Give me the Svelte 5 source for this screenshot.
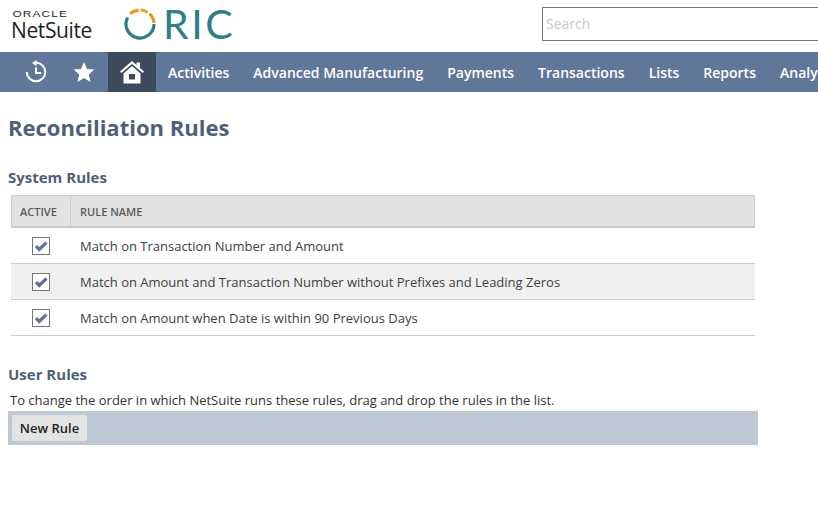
<script>
	const navItems = ['Activities', 'Advanced Manufacturing', 'Payments', 'Transactions', 'Lists', 'Reports', 'Analytics'];
	const systemRules = [
		'Match on Transaction Number and Amount',
		'Match on Amount and Transaction Number without Prefixes and Leading Zeros',
		'Match on Amount when Date is within 90 Previous Days'
	];
</script>

<div class="page">
	<header class="top">
		<div class="ns-logo">
			<span class="oracle">ORACLE</span>
			<span class="netsuite">NetSuite</span>
		</div>
		<div class="oric">
			<svg class="ring" width="34" height="32" viewBox="0 0 34 32" fill="none" stroke-width="3.2">
				<path d="M31 16A14 14 0 1 1 4.6 9.5" stroke="#2f7f86" />
				<path d="M7.3 5.9A14 14 0 0 1 15.7 2.1" stroke="#e8981f" />
				<path d="M17.6 2A14 14 0 0 1 24.6 4.3" stroke="#e8a52f" />
				<path d="M26.4 5.6A14 14 0 0 1 30.95 14.8" stroke="#e8981f" />
			</svg>
			<span class="oric-text">RIC</span>
		</div>
		<div class="search">Search</div>
	</header>

	<nav class="nav">
		<div class="icon-tab">
			<svg width="24" height="24" viewBox="0 0 24 24" fill="none" stroke="#fff" stroke-width="2">
				<path d="M12 2.7A9.3 9.3 0 1 1 2.7 12" />
				<path d="M12 7.5V13h5.3" />
				<path d="M12.6 -0.2v6.4L8 3z" fill="#fff" stroke="none" />
			</svg>
		</div>
		<div class="icon-tab">
			<svg width="22" height="22" viewBox="0 0 22 22">
				<path d="M11 1l3 7 7.5.6-5.7 4.9 1.8 7.4L11 16.9l-6.6 4 1.8-7.4L.5 8.6 8 8z" fill="#fff" />
			</svg>
		</div>
		<div class="icon-tab home">
			<svg width="26" height="24" viewBox="0 0 26 24">
				<path d="M13 1L1 11.5l1.4 1.6L13 3.9l10.6 9.2 1.4-1.6-4-3.5V2.5h-3.5v2.4z" fill="#fff" />
				<path d="M13 6L4.5 13.5V23.5h17V13.5zM10 14h6v5.5h-6z" fill="#fff" fill-rule="evenodd" />
			</svg>
		</div>
		{#each navItems as item}
			<div class="nav-item">{item}</div>
		{/each}
	</nav>

	<main class="content">
		<h1>Reconciliation Rules</h1>

		<h2 class="system-title">System Rules</h2>
		<div class="table">
			<div class="thead">
				<div class="th col-active">ACTIVE</div>
				<div class="th col-name">RULE NAME</div>
			</div>
			{#each systemRules as rule, i}
				<div class="row" class:alt={i === 1}>
					<div class="cell-check">
						<span class="check">
							<svg width="14" height="12" viewBox="0 0 14 12">
								<path d="M2 6.2l3.2 3.2L12.5 2.5" fill="none" stroke="#5f7394" stroke-width="3.2" />
							</svg>
						</span>
					</div>
					<div class="cell-name">{rule}</div>
				</div>
			{/each}
		</div>

		<h2 class="user-title">User Rules</h2>
		<p class="help">To change the order in which NetSuite runs these rules, drag and drop the rules in the list.</p>
		<div class="toolbar">
			<button class="btn">New Rule</button>
		</div>
	</main>
</div>

<style>
	:global(body) {
		margin: 0;
		background: #fff;
	}

	.page {
		width: 818px;
		height: 507px;
		overflow: hidden;
		font-family: 'Open Sans', sans-serif;
		color: #333;
	}

	.top {
		height: 52px;
		display: flex;
		align-items: flex-start;
		padding-left: 11px;
		box-sizing: border-box;
	}

	.ns-logo {
		width: 112px;
		flex: none;
		display: flex;
		flex-direction: column;
		padding-top: 9px;
		color: #1f1f1f;
		font-family: 'Liberation Sans', sans-serif;
	}

	.oracle {
		font-size: 8.5px;
		line-height: 10px;
		letter-spacing: 0.8px;
		padding-left: 1px;
		transform: scaleX(1.4);
		transform-origin: left;
		white-space: nowrap;
	}

	.netsuite {
		font-family: 'Open Sans', sans-serif;
		font-size: 21px;
		line-height: 22px;
		letter-spacing: -0.4px;
	}

	.oric {
		width: 419px;
		flex: none;
		display: flex;
		align-items: center;
		height: 32px;
		margin-top: 8px;
	}

	.oric-text {
		font-family: Lato, sans-serif;
		font-weight: 400;
		font-size: 41px;
		line-height: 32px;
		letter-spacing: 2.5px;
		color: #2f7f86;
		margin-left: 6px;
	}

	.search {
		flex: 1;
		height: 32px;
		margin-top: 7px;
		border: 1px solid #777;
		border-right: none;
		padding: 0 3px;
		font-size: 14px;
		line-height: 32px;
		color: #c8c8c8;
	}

	.nav {
		height: 40px;
		background: #607799;
		display: flex;
		align-items: center;
		padding-left: 12px;
		white-space: nowrap;
	}

	.icon-tab {
		width: 48px;
		height: 40px;
		flex: none;
		display: flex;
		align-items: center;
		justify-content: center;
	}

	.home {
		background: #3c4a5e;
	}

	.nav-item {
		flex: none;
		padding: 0 12px;
		color: #fff;
		font-size: 14px;
		font-weight: 600;
	}

	.content {
		padding-left: 8px;
	}

	h1 {
		margin: 0;
		padding-top: 20px;
		font-size: 22px;
		line-height: 30px;
		font-weight: 700;
		color: #4d5f79;
	}

	h2 {
		margin: 0;
		font-size: 15px;
		line-height: 20px;
		font-weight: 700;
		color: #4d5f79;
	}

	.system-title {
		margin-top: 25px;
	}

	.table {
		margin: 8px 0 0 3px;
		width: 744px;
	}

	.thead {
		display: flex;
		width: 742px;
		height: 30px;
		background: #e2e2e2;
		border: 1px solid #ccc;
		border-bottom-width: 2px;
	}

	.th {
		font-size: 11px;
		font-weight: 600;
		line-height: 31px;
		color: #5a5a5a;
		padding-left: 8px;
	}

	.col-active {
		width: 50px;
		border-right: 1px solid #ccc;
	}

	.col-name {
		padding-left: 9px;
	}

	.row {
		display: flex;
		align-items: center;
		height: 35px;
		border-bottom: 1px solid #ccc;
	}

	.alt {
		background: #f0f0f0;
	}

	.cell-check {
		width: 60px;
		display: flex;
		justify-content: center;
	}

	.check {
		width: 16px;
		height: 16px;
		border: 1px solid #777;
		background: #fff;
		display: flex;
		align-items: center;
		justify-content: center;
	}

	.cell-name {
		padding-left: 9px;
		font-size: 13px;
		color: #404040;
	}

	.user-title {
		margin-top: 28px;
	}

	.help {
		margin: 7px 0 0 2px;
		font-size: 13px;
		line-height: 18px;
		color: #333;
	}

	.toolbar {
		width: 750px;
		height: 34px;
		margin-top: 2px;
		background: #bfc9d5;
		padding: 4px;
		box-sizing: border-box;
	}

	.btn {
		display: block;
		height: 26px;
		width: 75px;
		padding: 0;
		border: none;
		border-radius: 2px;
		background: #e3e3e3;
		font-family: 'Open Sans', sans-serif;
		font-size: 13px;
		font-weight: 600;
		color: #222;
	}
</style>
